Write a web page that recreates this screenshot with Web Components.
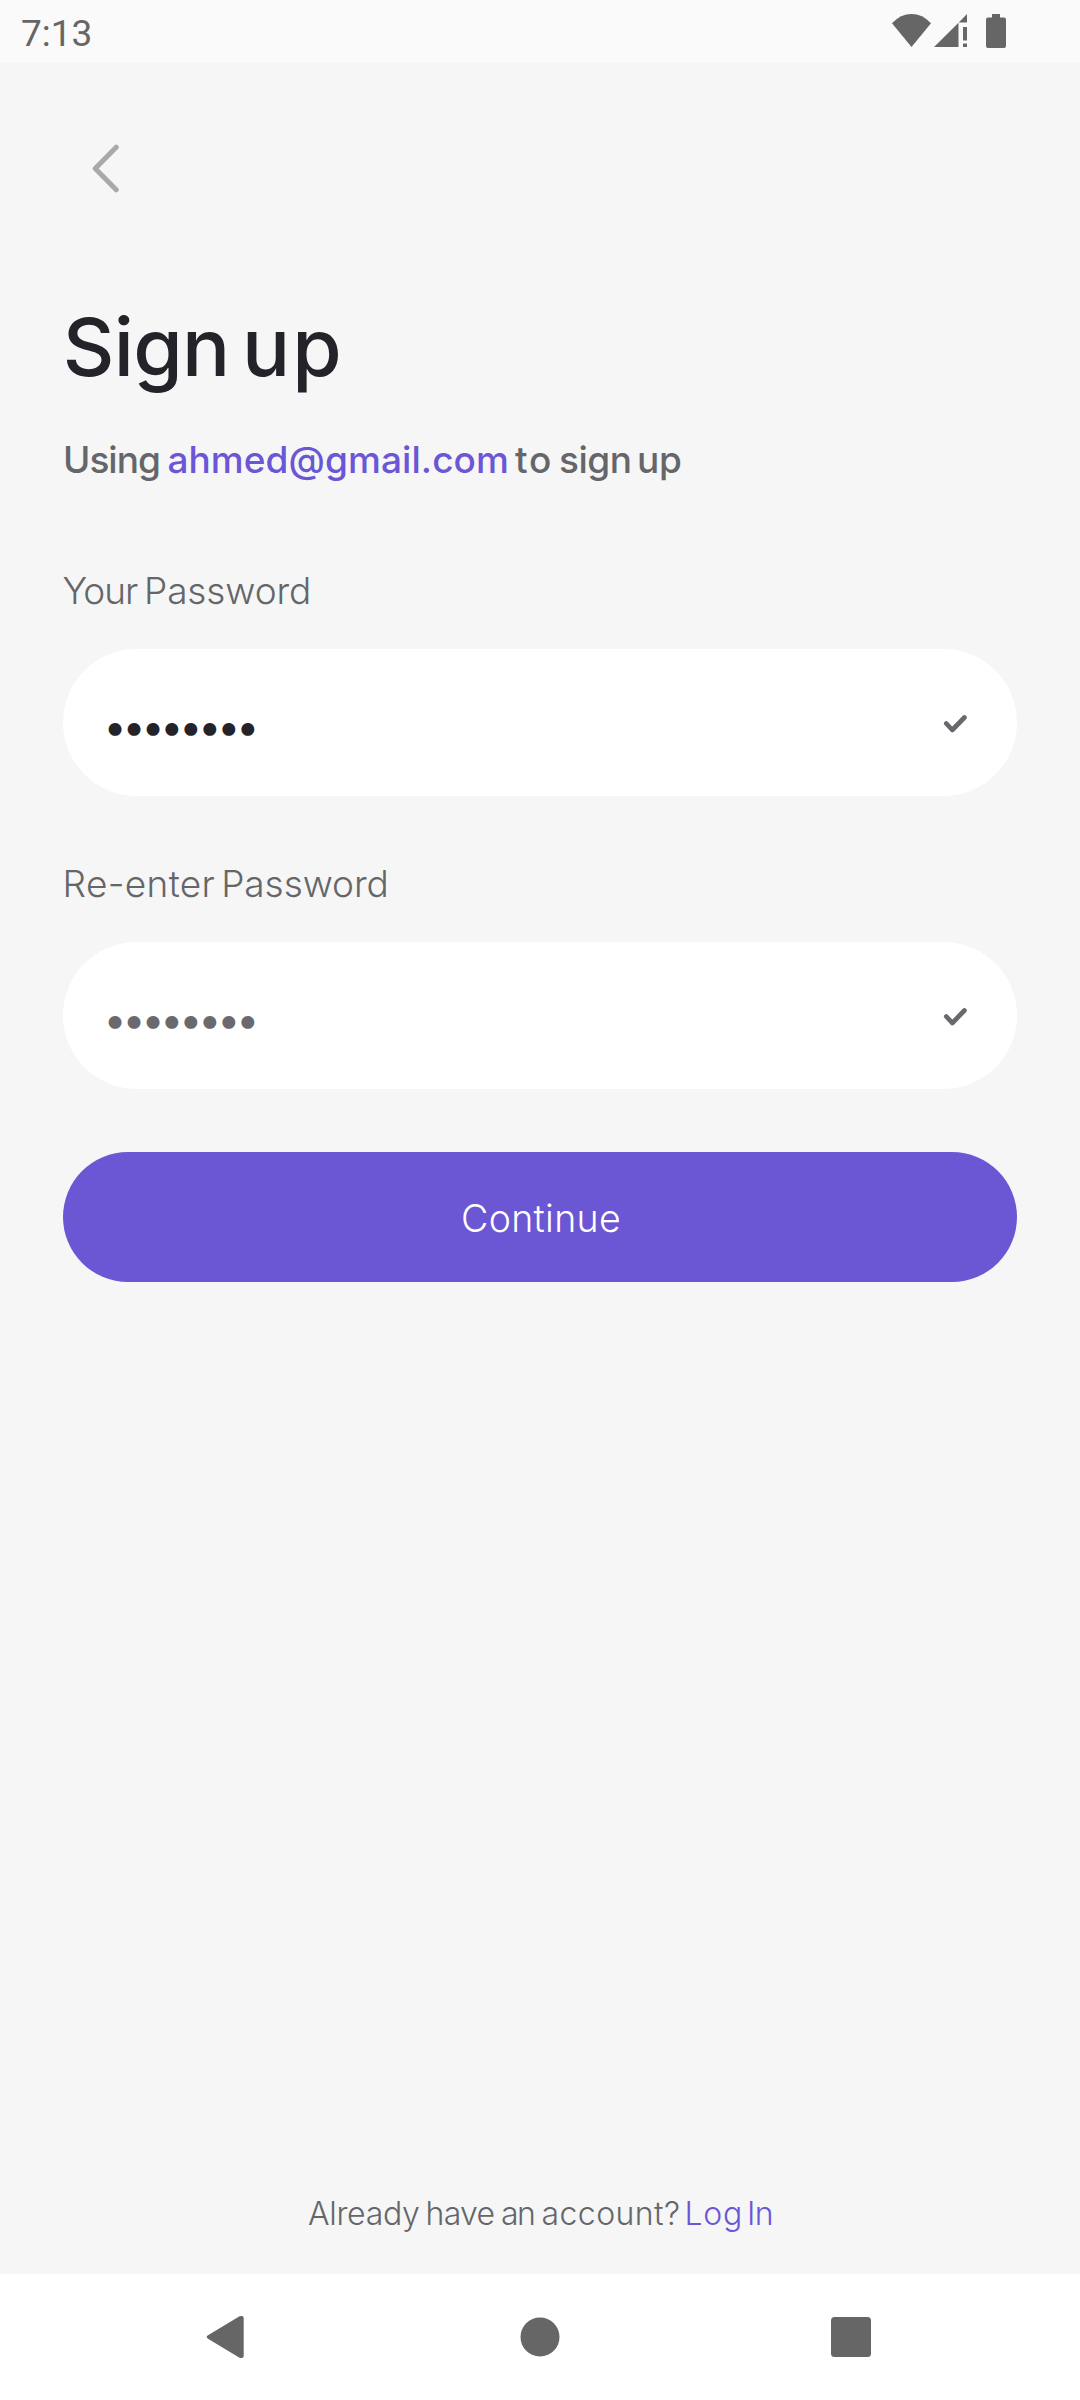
<!DOCTYPE html>
<html lang="en">
<head>
<meta charset="utf-8">
<title>Sign up</title>
<style>
  html, body { margin: 0; }
  body { width: 1080px; height: 2400px; overflow: hidden; background: #f6f6f6; font-family: Inter, "Liberation Sans", sans-serif; }
</style>
</head>
<body>
<signup-app></signup-app>
<script>
const define = (name, html, ready) => {
  const template = document.createElement('template');
  template.innerHTML = html;
  customElements.define(name, class extends HTMLElement {
    connectedCallback() {
      if (this.shadowRoot) return;
      this.attachShadow({ mode: 'open' }).append(template.content.cloneNode(true));
      if (ready) ready(this, this.shadowRoot);
    }
  });
};

// One line of text whose words are tracked to given ink extents.
// "extents" lists left,right pairs in px, measured from the line's own left edge.
define('type-line', `
  <style>
    :host { display: block; font-kerning: normal; }
    div { white-space: pre; }
    .accent { color: #6b56d6; }
  </style><div></div>`, (host, root) => {
  const box = root.querySelector('div');
  const style = getComputedStyle(host);
  const ctx = document.createElement('canvas').getContext('2d');
  ctx.font = `${style.fontWeight} ${style.fontSize} ${style.fontFamily}`;
  const words = host.getAttribute('text').split(' ');
  const extents = host.getAttribute('extents').split(' ').map(p => p.split(',').map(Number));
  const accents = (host.getAttribute('accent') || '').split(' ');
  const space = ctx.measureText(' ').width;
  let pen = 0;
  words.forEach((word, i) => {
    const m = ctx.measureText(word);
    const [left, right] = extents[i];
    const n = [...word].length;
    const track = n > 1 ? (right - left - m.actualBoundingBoxRight - m.actualBoundingBoxLeft) / (n - 1) : 0;
    const start = left + m.actualBoundingBoxLeft;
    if (i === 0) box.style.marginLeft = start + 'px';
    else {
      const gap = document.createElement('span');
      gap.textContent = ' ';
      gap.style.letterSpacing = (start - pen - space) + 'px';
      box.append(gap);
    }
    const span = document.createElement('span');
    span.textContent = word;
    span.style.letterSpacing = track + 'px';
    if (accents.includes(word)) span.className = 'accent';
    box.append(span);
    pen = start + m.width + n * track;
  });
});

define('status-bar', `
  <style>
    :host { display: flex; justify-content: space-between; box-sizing: border-box; height: 63px; padding: 0 74px 0 21px; background: #fafafa; color: #666; }
    time { font: 400 37px/67px Roboto, sans-serif; }
    div { display: flex; padding-top: 14px; }
    svg { display: block; fill: #666; }
  </style>
  <time>7:13</time>
  <div>
    <svg width="39" height="34" style="margin-right:3px"><path d="M0 9.3Q8.5 0 19.5 0T39 9.3L19.5 33Z"/></svg>
    <svg width="33" height="34" style="margin-right:19px"><path d="M0 33L24.5 8.7V33ZM33 0V8.5H24.7ZM29 13H33V26.5H29ZM29 29.5H33V33H29Z"/></svg>
    <svg width="20" height="34"><path d="M6 0H14V3.5H18Q20 3.5 20 5.5V32Q20 34 18 34H2Q0 34 0 32V5.5Q0 3.5 2 3.5H6Z"/></svg>
  </div>`);

define('back-button', `
  <style>
    :host { display: block; }
    svg { display: block; fill: none; stroke: #a9a9ab; stroke-width: 5; stroke-linecap: round; stroke-linejoin: round; }
  </style>
  <svg width="28" height="50" viewBox="0 0 28 50"><path d="M24.2 4.2L3.2 25.5L24.2 46.8"/></svg>`);

define('password-field', `
  <style>
    :host { display: block; color: #65666a; }
    type-line { font-size: 37px; line-height: 48px; font-weight: 300; }
    .box { display: flex; align-items: center; justify-content: space-between; box-sizing: border-box; height: 147px; margin-top: 34px; padding: 0 50px 0 0; border-radius: 74px; background: #fff; }
    .dots { font-size: 41px; line-height: 60px; font-weight: 400; padding-top: 7px; color: var(--dots); }
    svg { display: block; fill: none; stroke: #68696d; stroke-width: 4.7; stroke-linecap: round; stroke-linejoin: round; }
  </style>
  <div class="box"><type-line class="dots" text="••••••••" extents="45.5,191.2"></type-line>
    <svg width="24" height="20" viewBox="0 0 24 20"><path d="M3.3 10.5L9.3 17L21.4 4.5"/></svg>
  </div>`, (host, root) => {
  const line = document.createElement('type-line');
  line.setAttribute('text', host.getAttribute('label'));
  line.setAttribute('extents', host.getAttribute('extents'));
  root.querySelector('.box').before(line);
});

define('primary-button', `
  <style>
    :host { display: block; box-sizing: border-box; height: 130px; padding-top: 43px; border-radius: 65px; background: #6b56d4; color: #fff; font-size: 37.5px; line-height: 48px; font-weight: 300; }
  </style><slot></slot>`);

define('nav-bar', `
  <style>
    :host { display: flex; align-items: center; justify-content: space-between; box-sizing: border-box; height: 126px; padding: 0 209px 0 206px; background: #fff; }
    svg { display: block; fill: #666; }
    .home { margin-left: 4px; }
  </style>
  <svg width="38" height="44" viewBox="0 0 38 44"><path d="M2 20.3L33.5 1.3Q37.7 0 37.7 3V41Q37.7 44 33.5 42.7L2 23.7Q-.6 22 2 20.3Z"/></svg>
  <svg class="home" width="40" height="40"><circle cx="20" cy="20" r="19.5"/></svg>
  <svg width="40" height="40"><rect width="40" height="40" rx="3.5"/></svg>`);

define('signup-app', `
  <style>
    :host { display: flex; flex-direction: column; height: 2400px; background: #f6f6f6; color: #65666a; }
    main { display: flex; flex-direction: column; flex: 1; padding: 80px 63px 40px; }
    back-button { margin-left: 29px; }
    .title { margin-top: 104px; font-size: 80px; line-height: 100px; font-weight: 500; color: #24232a; }
    .using { margin-top: 39px; font-size: 37px; line-height: 48px; font-weight: 500; }
    .first { --dots: #24232a; margin-top: 83px; }
    .second { --dots: #6a6a6e; margin-top: 64px; }
    primary-button { margin-top: 63px; }
    .foot { margin-top: auto; font-size: 32px; line-height: 40px; font-weight: 300; }
  </style>
  <status-bar></status-bar>
  <main>
    <back-button></back-button>
    <type-line class="title" text="Sign up" extents="3.7,162 184,275.3"></type-line>
    <type-line class="using" text="Using ahmed@gmail.com to sign up" accent="ahmed@gmail.com" extents="2,96 105.4,444 452,487 497,566.6 576,618"></type-line>
    <password-field class="first" label="Your Password" extents="0.6,75 84,246"></password-field>
    <password-field class="second" label="Re-enter Password" extents="2.6,151.5 161.2,323.5"></password-field>
    <primary-button><type-line text="Continue" extents="400,556"></type-line></primary-button>
    <type-line class="foot" text="Already have an account? Log In" accent="Log In" extents="245,356 364.5,430.5 439,471 479.5,616 624.5,677 687,708.8"></type-line>
  </main>
  <nav-bar></nav-bar>`);
</script>
</body>
</html>
